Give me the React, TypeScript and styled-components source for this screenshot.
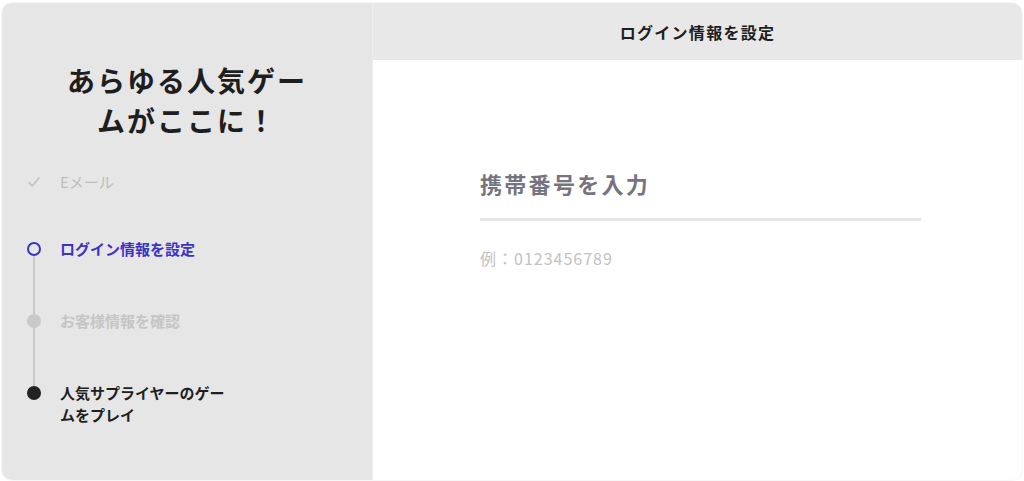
import React from 'react';
import styled, { createGlobalStyle } from 'styled-components';

const GlobalStyle = createGlobalStyle`
  html, body {
    margin: 0;
    padding: 0;
    background: #ffffff;
  }
  body {
    font-family: "Noto Sans CJK JP", "Noto Sans", sans-serif;
    -webkit-font-smoothing: antialiased;
  }
`;

type StepState = 'done' | 'active' | 'pending' | 'final';

interface StepData {
  label: string;
  state: StepState;
  height: number;
  lineAbove: boolean;
  lineBelow: boolean;
}

const STEPS: StepData[] = [
  { label: 'Eメール', state: 'done', height: 67, lineAbove: false, lineBelow: false },
  { label: 'ログイン情報を設定', state: 'active', height: 72, lineAbove: false, lineBelow: true },
  { label: 'お客様情報を確認', state: 'pending', height: 72, lineAbove: true, lineBelow: true },
  { label: '人気サプライヤーのゲームをプレイ', state: 'final', height: 72, lineAbove: true, lineBelow: false },
];

const textColor: Record<StepState, string> = {
  done: '#bdbdbd',
  active: '#3c33c4',
  pending: '#c5c5c5',
  final: '#1f1f1f',
};

const App = () => (
  <Page>
    <GlobalStyle />
    <Card>
      <Sidebar>
        <Headline>
          あらゆる人気ゲー
          <br />
          ムがここに！
        </Headline>
        <StepList>
          {STEPS.map((step) => (
            <Step key={step.label} $height={step.height}>
              <Rail>
                <RailLine $visible={step.lineAbove} $fixed />
                <Marker state={step.state} />
                <RailLine $visible={step.lineBelow} />
              </Rail>
              <StepLabel $state={step.state}>{step.label}</StepLabel>
            </Step>
          ))}
        </StepList>
      </Sidebar>
      <Main>
        <MainHeader>ログイン情報を設定</MainHeader>
        <MainBody>
          <Field>
            <PhoneInput placeholder="携帯番号を入力" />
            <Hint>例：0123456789</Hint>
          </Field>
        </MainBody>
      </Main>
    </Card>
  </Page>
);

const Marker = ({ state }: { state: StepState }) => {
  if (state === 'done') {
    return (
      <CheckWrap>
        <svg width="14" height="14" viewBox="0 0 14 14" fill="none">
          <path d="M2 7.6 L5.3 11 L12 2.8" stroke="#c2c2c2" strokeWidth="1.6" strokeLinecap="round" strokeLinejoin="round" />
        </svg>
      </CheckWrap>
    );
  }
  return <Dot $state={state} />;
};

const Page = styled.div`
  width: 1024px;
  height: 481px;
  padding: 3px 2px 1px 2px;
  box-sizing: border-box;
  display: flex;
`;

const Card = styled.div`
  flex: 1;
  display: flex;
  border-radius: 10px;
  overflow: hidden;
  background: #ffffff;
  box-shadow: 0 0 2px rgba(0, 0, 0, 0.12);
`;

const Sidebar = styled.aside`
  width: 371px;
  flex-shrink: 0;
  background: #e6e6e6;
  border-right: 1px solid #eeeeee;
  box-sizing: border-box;
  padding-top: 57px;
  display: flex;
  flex-direction: column;
`;

const Headline = styled.h1`
  margin: 0;
  text-align: center;
  font-size: 28px;
  line-height: 40px;
  letter-spacing: 2px;
  font-weight: 700;
  color: #1e1e1e;
`;

const StepList = styled.ol`
  list-style: none;
  margin: 31px 0 0 0;
  padding: 0 0 0 25px;
  display: flex;
  flex-direction: column;
`;

const Step = styled.li<{ $height: number }>`
  display: flex;
  gap: 19px;
  min-height: ${(p) => p.$height}px;
`;

const Rail = styled.div`
  width: 14px;
  flex-shrink: 0;
  display: flex;
  flex-direction: column;
  align-items: center;
`;

const RailLine = styled.span<{ $visible: boolean; $fixed?: boolean }>`
  width: 2px;
  background: ${(p) => (p.$visible ? '#c9c9c9' : 'transparent')};
  ${(p) => (p.$fixed ? 'height: 4px;' : 'flex: 1;')}
`;

const CheckWrap = styled.span`
  width: 14px;
  height: 14px;
  display: flex;
  align-items: center;
  justify-content: center;
`;

const Dot = styled.span<{ $state: StepState }>`
  width: 14px;
  height: 14px;
  box-sizing: border-box;
  border-radius: 50%;
  flex-shrink: 0;
  border: ${(p) => (p.$state === 'active' ? '2.5px solid #3c33c4' : 'none')};
  background: ${(p) =>
    p.$state === 'active' ? 'transparent' : p.$state === 'final' ? '#222222' : '#c9c9c9'};
`;

const StepLabel = styled.span<{ $state: StepState }>`
  width: 176px;
  font-size: 15px;
  line-height: 22px;
  font-weight: ${(p) => (p.$state === 'done' ? 400 : 700)};
  color: ${(p) => textColor[p.$state]};
`;

const Main = styled.section`
  flex: 1;
  display: flex;
  flex-direction: column;
`;

const MainHeader = styled.header`
  height: 57px;
  background: #e8e8e8;
  display: flex;
  align-items: center;
  justify-content: center;
  font-size: 16px;
  font-weight: 600;
  letter-spacing: 1.3px;
  color: #1e1e1e;
`;

const MainBody = styled.div`
  flex: 1;
  display: flex;
  justify-content: center;
  padding-top: 99px;
  padding-left: 6px;
`;

const Field = styled.div`
  width: 441px;
  display: flex;
  flex-direction: column;
`;

const PhoneInput = styled.input`
  border: none;
  border-bottom: 3px solid #e6e6e6;
  outline: none;
  padding: 0 0 12px 0;
  margin: 0;
  font-family: inherit;
  font-size: 22px;
  line-height: 32px;
  height: 47px;
  letter-spacing: 2.3px;
  font-weight: 600;
  background: transparent;
  color: #333333;

  &::placeholder {
    color: #76747e;
    opacity: 1;
  }
`;

const Hint = styled.div`
  margin-top: 26px;
  font-size: 16px;
  line-height: 22px;
  letter-spacing: 1px;
  color: #c2c2c2;
`;

export default App;
